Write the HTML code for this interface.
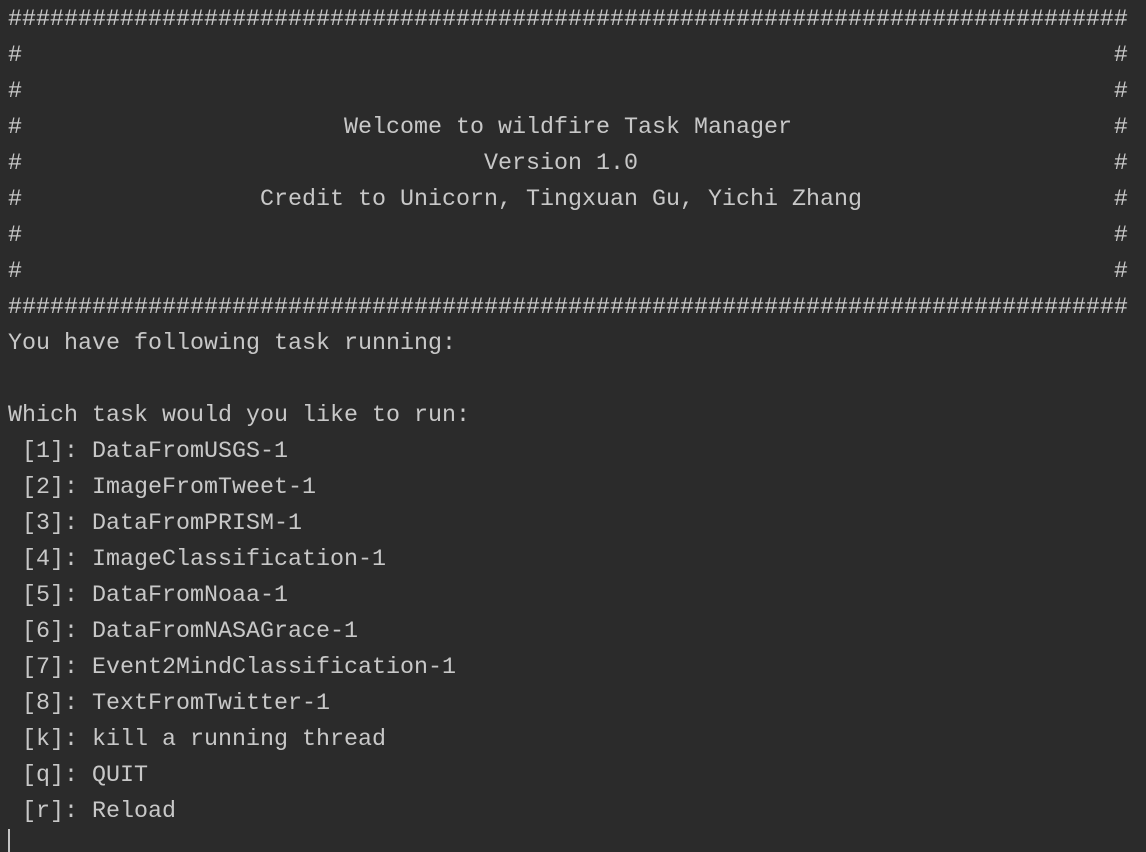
<!DOCTYPE html>
<html><head><style>
html,body{margin:0;padding:0;background:#2b2b2b;width:1146px;height:852px;overflow:hidden}
pre{position:absolute;left:8px;top:2px;margin:0;font-family:"Liberation Mono",monospace;font-size:23.33px;line-height:36px;color:#c8c8c8;white-space:pre}
.cur{position:absolute;left:8px;top:829px;width:2px;height:23px;background:#c4c4c4}
</style></head><body>
<pre>################################################################################
#                                                                              #
#                                                                              #
#                       Welcome to wildfire Task Manager                       #
#                                 Version 1.0                                  #
#                 Credit to Unicorn, Tingxuan Gu, Yichi Zhang                  #
#                                                                              #
#                                                                              #
################################################################################
You have following task running:

Which task would you like to run:
 [1]: DataFromUSGS-1
 [2]: ImageFromTweet-1
 [3]: DataFromPRISM-1
 [4]: ImageClassification-1
 [5]: DataFromNoaa-1
 [6]: DataFromNASAGrace-1
 [7]: Event2MindClassification-1
 [8]: TextFromTwitter-1
 [k]: kill a running thread
 [q]: QUIT
 [r]: Reload</pre>
<div class="cur"></div>
</body></html>
